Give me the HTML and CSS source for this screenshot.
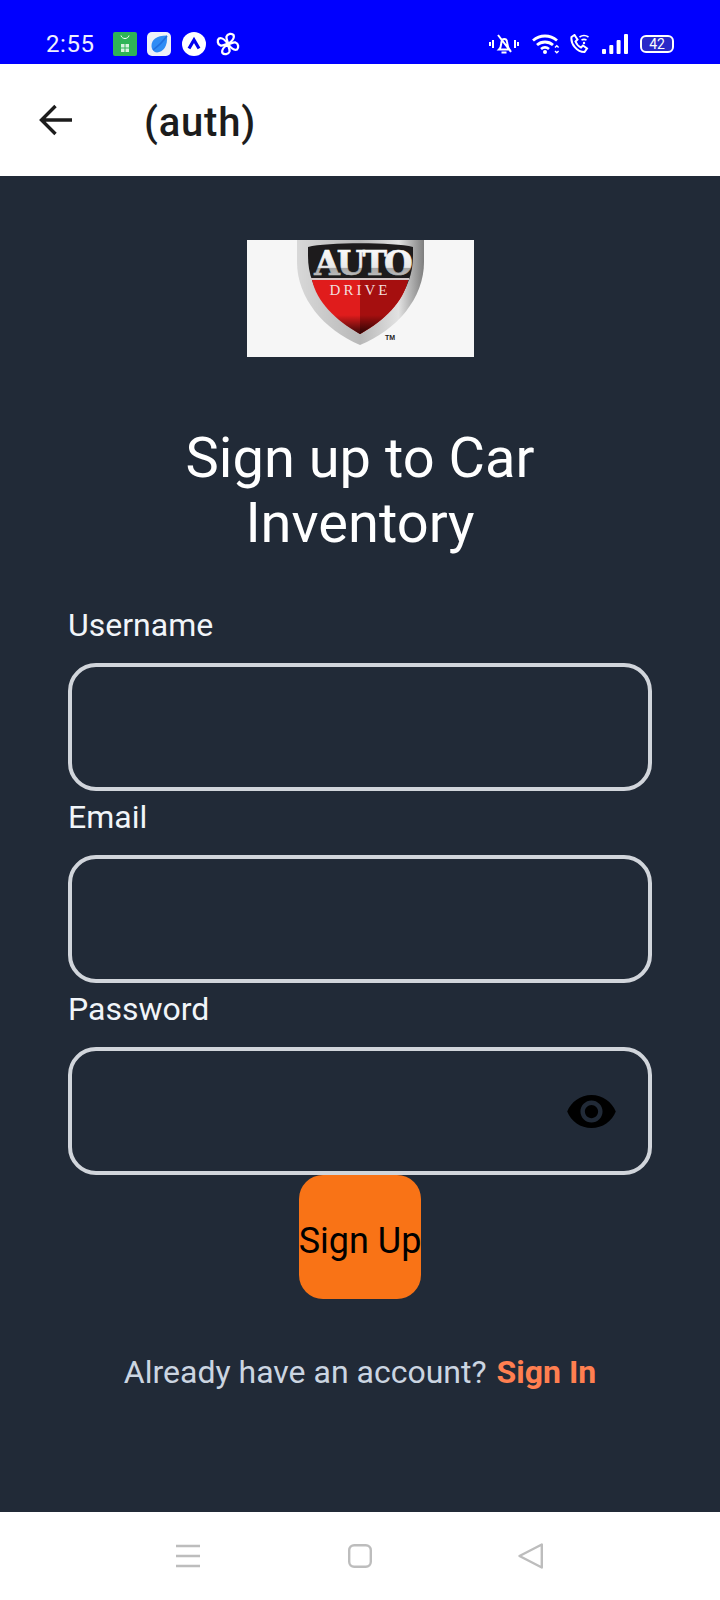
FILE: index.html
```html
<!DOCTYPE html>
<html lang="en">
<head>
<meta charset="utf-8">
<title>(auth)</title>
<link rel="stylesheet" href="styles.css">
</head>
<body>
<div class="phone">
  <div class="status">
    <span class="time">2:55</span>
    <div class="notifs">
      <svg class="ni" viewBox="0 0 24 24"><rect width="24" height="24" rx="2" fill="#2fb457"/><path d="M8 3.500c1 4 7 4 8 0" fill="none" stroke="#fff" stroke-width="1"/><path d="M8 12h3.500v3.500H8zM12.500 12H16v3.500h-3.500zM8 16.500h3.500V20H8zM12.500 16.500H16V20h-3.500z" fill="#d7f3df"/></svg>
      <svg class="ni" viewBox="0 0 24 24"><rect width="24" height="24" rx="5" fill="#eef1f8"/><path d="M4.500 14C4.500 8 9 3.500 20 3.500c1 11-4 16.500-10 17-3 0-5.500-3-5.500-6.500z" fill="#2f8cf5"/><path d="M6 18C10 15 15 11 20 4" fill="none" stroke="#1f6fe0" stroke-width="1.500"/></svg>
      <svg class="ni" viewBox="0 0 24 24"><circle cx="12" cy="12" r="12" fill="#fff"/><path d="M7 16.500 12 8l5 8.500" fill="none" stroke="#0000f0" stroke-width="3.200"/></svg>
      <svg class="ni" viewBox="0 0 24 24" fill="none" stroke="#fff" stroke-width="2.300" stroke-linejoin="round">
        <path d="M12 12C12 9 10 7.500 10.500 4.500 11.500 1.500 16 1 17.500 3 19 6 15 10 12 12z"/>
        <path d="M12 12C12 9 10 7.500 10.500 4.500 11.500 1.500 16 1 17.500 3 19 6 15 10 12 12z" transform="rotate(90 12 12)"/>
        <path d="M12 12C12 9 10 7.500 10.500 4.500 11.500 1.500 16 1 17.500 3 19 6 15 10 12 12z" transform="rotate(180 12 12)"/>
        <path d="M12 12C12 9 10 7.500 10.500 4.500 11.500 1.500 16 1 17.500 3 19 6 15 10 12 12z" transform="rotate(270 12 12)"/>
      </svg>
    </div>
    <div class="sys">
      <svg class="s-bell" viewBox="0 0 30 20" fill="none" stroke="#fff" stroke-width="2"><path d="M10 15.500c2.500-2.500 2-5 2.500-8 .5-3.500 5-3.500 5.500 0 .5 3 .5 5.500 2.500 8zM9 1l13 17M12.500 18.500h5M1 8v4M4 6v8M26 6v8M29 8v4"/></svg>
      <svg class="s-wifi" viewBox="0 0 28 20" fill="none" stroke="#fff" stroke-width="2.800"><path d="M1 6.500c7-6 17-6 24 0M5 11c4.500-4 11.500-4 16 0M9 15c2.500-2 5.500-2 8 0"/><circle cx="13" cy="18" r="2" fill="#fff" stroke="none"/><path d="M23 13.500l1.800-1.800 1.800 1.800M23 17l1.800 1.800 1.800-1.800" stroke-width="1.400"/></svg>
      <svg class="s-call" viewBox="0 0 20 20" fill="none" stroke="#fff" stroke-width="2"><path d="M1.500 3l3-2 3 4.500-2 2c1 2.500 3 5 5.500 6l2-2 4 3-2.500 3.500C7 18 .5 10 1.500 3z"/><path d="M9.500 3c3-2 6-2 9 0M11.500 6c2-1 3-1 5 0" stroke-width="1.600"/><circle cx="14" cy="9" r="1.200" fill="#fff" stroke="none"/></svg>
      <svg class="s-sig" viewBox="0 0 26 20" fill="#fff"><rect x="0" y="15" width="4" height="5" rx="1"/><rect x="7.300" y="11" width="4" height="9" rx="1"/><rect x="14.600" y="6" width="4" height="14" rx="1"/><rect x="22" y="0" width="4" height="20" rx="1"/></svg>
      <span class="batt"><span class="batt-num">42</span></span>
    </div>
  </div>

  <header class="bar">
    <svg class="back" viewBox="0 0 34 34" fill="none" stroke="#1c1c1c" stroke-width="3.400"><path d="M34 17H3.500M17.500 3 3.500 17l14 14"/></svg>
    <span class="bar-title">(auth)</span>
  </header>

  <main class="screen">
    <svg class="logo" viewBox="0 0 227 117">
      <defs>
        <linearGradient id="rim" x1="0" x2="1" y1="0" y2="0"><stop offset="0" stop-color="#d8d8d8"/><stop offset=".5" stop-color="#b8b8b8"/><stop offset=".8" stop-color="#e2e2e2"/><stop offset="1" stop-color="#7e7e7e"/></linearGradient>
        <linearGradient id="auto" x1="0" x2="0" y1="0" y2="1"><stop offset="0" stop-color="#fff"/><stop offset=".6" stop-color="#e8e8e8"/><stop offset=".62" stop-color="#a8a8a8"/><stop offset="1" stop-color="#d0d0d0"/></linearGradient>
        <linearGradient id="fade" x1="0" x2="0" y1="0" y2="1"><stop offset="0" stop-color="#000" stop-opacity="0"/><stop offset=".65" stop-color="#000" stop-opacity="0"/><stop offset="1" stop-color="#000" stop-opacity=".75"/></linearGradient>
      </defs>
      <rect width="227" height="117" fill="#f6f6f6"/>
      <path d="M50 0H177V22C177 58 150 90 113 105C77 90 50 58 50 22Z" fill="url(#rim)"/>
      <path d="M61 7C80 2 147 2 166 7V16C166 52 141 76 113 94C85 76 61 52 61 16Z" fill="#1d1b1c"/>
      <path d="M65 40H161C156 62 138 80 113 94C88 80 70 62 65 40Z" fill="#e01c1c"/>
      <path d="M113 40H161C156 62 138 80 113 94Z" fill="#a50f0f"/>
      <path d="M65 40H161C156 62 138 80 113 94C88 80 70 62 65 40Z" fill="url(#fade)"/>
      <rect x="64" y="38" width="98" height="2" fill="#d4c8c8"/>
      <text class="logo-auto" x="115" y="35" text-anchor="middle" fill="url(#auto)" stroke="url(#auto)">AUTO</text>
      <text class="logo-drive" x="113" y="55" text-anchor="middle">DRIVE</text>
      <text class="logo-tm" x="138" y="100">TM</text>
    </svg>

    <h1 class="title">Sign up to Car Inventory</h1>

    <form class="form">
      <div class="field">
        <label class="label">Username</label>
        <div class="input"></div>
      </div>
      <div class="field">
        <label class="label">Email</label>
        <div class="input"></div>
      </div>
      <div class="field">
        <label class="label">Password</label>
        <div class="input">
          <svg class="eye" viewBox="0 0 24 24"><path d="M12 4.500C7 4.500 2.730 7.610 1 12c1.730 4.390 6 7.500 11 7.500s9.270-3.110 11-7.500c-1.730-4.390-6-7.500-11-7.500zM12 17c-2.760 0-5-2.240-5-5s2.240-5 5-5 5 2.240 5 5-2.240 5-5 5zm0-8c-1.660 0-3 1.340-3 3s1.340 3 3 3 3-1.340 3-3-1.340-3-3-3z"/></svg>
        </div>
      </div>
      <div class="btn"><span class="btn-text">Sign Up</span></div>
      <p class="foot">Already have an account? <a class="signin">Sign In</a></p>
    </form>
  </main>

  <nav class="nav">
    <svg class="nav-i nav-menu" viewBox="0 0 24 24" stroke="#bdbdbd" stroke-width="2.400"><path d="M0 2h24M0 12h24M0 22h24"/></svg>
    <svg class="nav-i nav-home" viewBox="0 0 24 24" fill="none" stroke="#bdbdbd" stroke-width="2.400"><rect x="1.200" y="1.200" width="21.600" height="21.600" rx="5"/></svg>
    <svg class="nav-i nav-back" viewBox="0 0 25 26" fill="none" stroke="#bdbdbd" stroke-width="2.400" stroke-linejoin="round"><path d="M23.800 1.500v23L1.500 13z"/></svg>
  </nav>
</div>
</body>
</html>
```

FILE: styles.css
```css
* { box-sizing: border-box; }
html, body { margin: 0; padding: 0; }
body { font-family: Roboto, "Liberation Sans", sans-serif; background: #fff; }
.phone { width: 720px; height: 1600px; display: flex; flex-direction: column; overflow: hidden; }

.status { height: 64px; flex: none; background: #00f; color: #fff; display: flex; align-items: center; padding: 24px 46px 0 46px; }
.time { font-size: 24px; width: 66.500px; color: #f0f0ff; letter-spacing: .6px; }
.notifs { display: flex; gap: 10.500px; align-items: center; }
.ni { width: 24px; height: 24px; display: block; }
.sys { margin-left: auto; display: flex; align-items: center; gap: 12px; }
.s-bell { width: 30px; height: 20px; margin-right: 1px; }
.s-wifi { width: 28px; height: 20px; margin-right: -2px; }
.s-call { width: 20px; height: 20px; }
.s-sig { width: 26px; height: 20px; }
.batt { width: 34px; height: 18px; border: 2px solid #fff; border-radius: 6px; background: #2a2ac8; display: flex; align-items: center; justify-content: center; }
.batt-num { font-size: 14px; line-height: 14px; color: #fff; }

.bar { height: 112px; flex: none; background: #fff; display: flex; align-items: center; padding: 0 0 0 38px; }
.back { width: 34px; height: 34px; flex: none; }
.bar-title { margin-left: 72px; font-size: 40px; font-weight: 500; letter-spacing: .8px; color: #1c1c1c; padding-top: 4px; }

.screen { flex: 1; background: #212a37; display: flex; flex-direction: column; align-items: center; padding-top: 64px; }
.logo { width: 227px; height: 117px; display: block; flex: none; }
.logo-auto { font-family: "DejaVu Serif", serif; font-weight: 700; font-size: 33px; letter-spacing: -3px; stroke-width: .7px; }
.logo-drive { font-family: "Liberation Serif", serif; font-size: 15px; letter-spacing: 3px; fill: #f2dede; }
.logo-tm { font-family: "Liberation Sans", sans-serif; font-weight: 700; font-size: 7px; fill: #222; }

.title { width: 400px; margin: 69px 0 0; text-align: center; color: #fff; font-size: 56px; line-height: 65px; font-weight: 400; }

.form { width: 584px; display: flex; flex-direction: column; margin-top: 43px; }
.field { display: flex; flex-direction: column; }
.label { color: #f1f5f9; font-size: 32px; line-height: 52px; height: 64px; }
.input { height: 128px; border: 4px solid #d1d5db; border-radius: 28px; display: flex; align-items: center; justify-content: flex-end; padding-right: 30px; }
.eye { width: 53px; height: 53px; fill: #000; display: block; filter: blur(.7px); }
.btn { width: 122px; height: 124px; align-self: center; background: #f97316; border-radius: 24px; color: #000; font-size: 36px; display: flex; align-items: center; justify-content: center; white-space: nowrap; }
.btn-text { padding-top: 7px; }
.foot { margin: 49px 0 0; text-align: center; color: #cbd5e1; font-size: 32px; line-height: 48px; }
.signin { color: #ff7f50; font-weight: 700; margin-left: 2px; }

.nav { height: 88px; flex: none; background: #fff; display: flex; align-items: center; padding-left: 176px; }
.nav-i { width: 24px; height: 24px; display: block; }
.nav-menu { margin-right: 148px; }
.nav-home { margin-right: 146px; }
.nav-back { width: 25px; height: 26px; }
```
